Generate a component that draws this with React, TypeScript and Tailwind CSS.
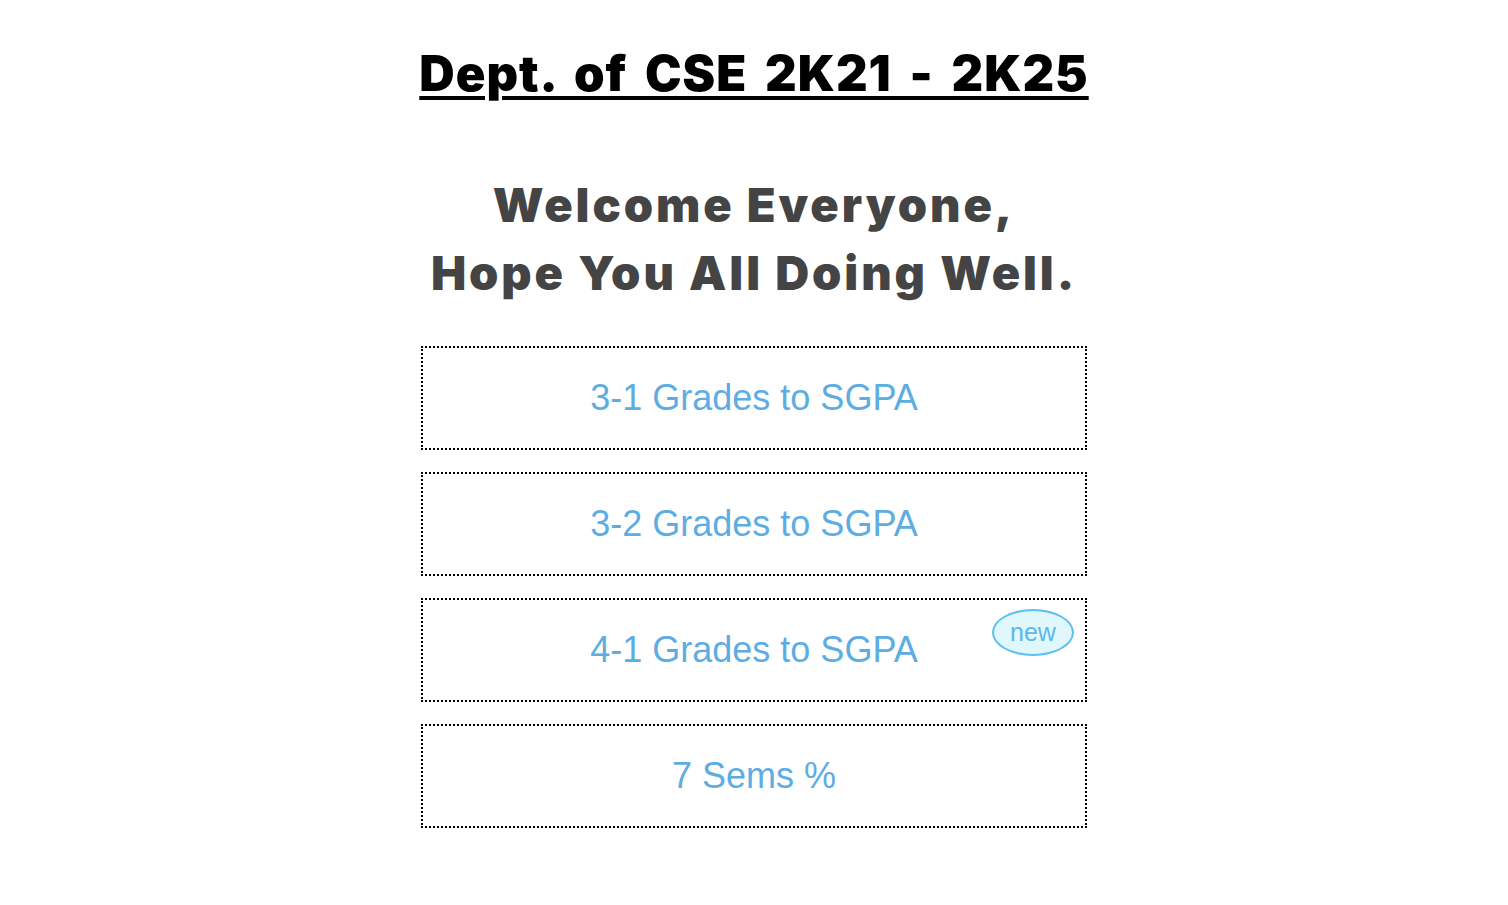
export default function App() {
  const items = ["3-1 Grades to SGPA", "3-2 Grades to SGPA", "4-1 Grades to SGPA", "7 Sems %"];
  return (
    <div className="min-h-[905px] bg-white flex flex-col items-center" style={{ fontFamily: '"Liberation Sans", Arial, sans-serif' }}>
      <h1
        className="mt-[44px] text-[49px] leading-[60px] text-black underline underline-offset-[5px] decoration-[4px] tracking-[1px] [word-spacing:7px]"
        style={{ fontFamily: 'Inter, "Liberation Sans", sans-serif', fontWeight: 900 }}
      >
        Dept. of CSE 2K21 - 2K25
      </h1>
      <h2
        className="mt-[67px] text-[47px] leading-[68px] text-[#444444] text-center tracking-[2.9px]"
        style={{ fontFamily: 'Inter, "Liberation Sans", sans-serif', fontWeight: 900 }}
      >
        Welcome Everyone,<br />Hope You All Doing Well.
      </h2>
      <div className="mt-[39px] w-[666px] flex flex-col gap-[22px]">
        {items.map((t, i) => (
          <div key={t} className="relative h-[104px] border-2 border-dotted border-black flex items-center justify-center text-[36px] text-[#5dade2]">
            {t}
            {i === 2 && (
              <span className="absolute right-[11px] top-[9px] w-[82px] h-[47px] rounded-[50%] border-2 border-[#5bc0f0] bg-[#e0f7fb] text-[#5bb8ee] text-[25px] leading-none flex items-center justify-center">
                new
              </span>
            )}
          </div>
        ))}
      </div>
    </div>
  );
}
